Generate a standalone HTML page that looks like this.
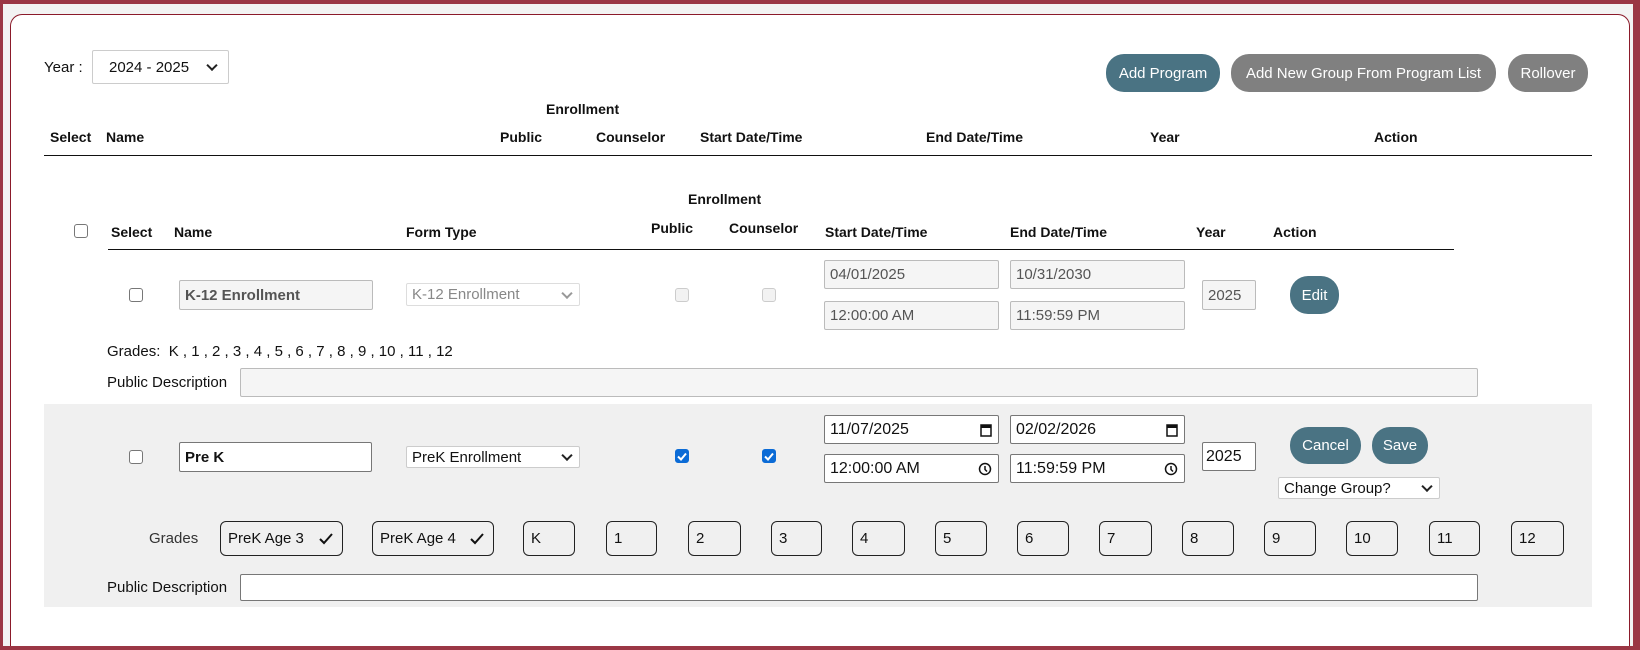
<!DOCTYPE html>
<html><head><style>
*{box-sizing:border-box;margin:0;padding:0}
body{width:1640px;height:650px;background:#9b3745;position:relative;overflow:hidden;font-family:"Liberation Sans",sans-serif;font-size:14px;color:#111}
.bg{position:absolute;left:3px;top:4px;width:1630px;height:642px;background:#f3f3f3}
.panel{position:absolute;left:10px;top:14px;width:1620px;height:632px;background:#fff;border:1px solid #8b1a2a;border-bottom:none;border-radius:12px 12px 0 0}
.a{position:absolute;white-space:nowrap}
.b{font-weight:bold}
.in{position:absolute;border:1px solid #bbb;background:#f5f5f5;border-radius:2px;padding:0 5px;display:flex;align-items:center;font-size:15px;color:#555}
.w{background:#fff;border-color:#777;color:#111}
.btn{position:absolute;border-radius:18px;color:#fff;font-size:15px;display:flex;align-items:center;justify-content:center;background:#4a7383}
.g{background:#808080}
.cb{position:absolute;width:14px;height:14px;border:1px solid #777;border-radius:3px;background:#fff}
.cbd{border-color:#ccc;background:#f2f2f2}
.cbc{background:#0b6bd6;border-color:#0b6bd6}
.gb{position:absolute;top:521px;height:35px;border:1px solid #222;border-radius:6px;padding-left:10px;display:flex;align-items:center;font-size:15px}
.chev{position:absolute;right:8px;top:50%;width:8px;height:8px;border-right:2px solid #222;border-bottom:2px solid #222;transform:translateY(-70%) rotate(45deg)}
.line{position:absolute;height:1px;background:#111}
</style></head><body>
<div class="bg"></div>
<div class="panel"></div>

<div class="a" style="left:44px;top:59px;font-size:15px">Year :</div>
<div class="in w" style="left:92px;top:50px;width:137px;height:34px;border-color:#ccc;font-size:15px;padding-left:16px">2024 - 2025<span class="chev" style="right:12px"></span></div>
<div class="btn" style="left:1106px;top:54px;width:114px;height:38px">Add Program</div>
<div class="btn g" style="left:1231px;top:54px;width:265px;height:38px">Add New Group From Program List</div>
<div class="btn g" style="left:1508px;top:54px;width:80px;height:38px">Rollover</div>

<div class="a b" style="left:546px;top:101px">Enrollment</div>
<div class="a b" style="left:50px;top:129px">Select</div>
<div class="a b" style="left:106px;top:129px">Name</div>
<div class="a b" style="left:500px;top:129px">Public</div>
<div class="a b" style="left:596px;top:129px">Counselor</div>
<div class="a b" style="left:700px;top:129px">Start Date/Time</div>
<div class="a b" style="left:926px;top:129px">End Date/Time</div>
<div class="a b" style="left:1150px;top:129px">Year</div>
<div class="a b" style="left:1374px;top:129px">Action</div>
<div class="line" style="left:44px;top:155px;width:1548px"></div>

<div class="a b" style="left:688px;top:191px">Enrollment</div>
<div class="cb" style="left:74px;top:224px"></div>
<div class="a b" style="left:111px;top:224px">Select</div>
<div class="a b" style="left:174px;top:224px">Name</div>
<div class="a b" style="left:406px;top:224px">Form Type</div>
<div class="a b" style="left:651px;top:220px">Public</div>
<div class="a b" style="left:729px;top:220px">Counselor</div>
<div class="a b" style="left:825px;top:224px">Start Date/Time</div>
<div class="a b" style="left:1010px;top:224px">End Date/Time</div>
<div class="a b" style="left:1196px;top:224px">Year</div>
<div class="a b" style="left:1273px;top:224px">Action</div>
<div class="line" style="left:108px;top:249px;width:1346px"></div>

<!-- row 1 -->
<div class="cb" style="left:129px;top:288px"></div>
<div class="in" style="left:179px;top:280px;width:194px;height:30px;font-weight:bold;color:#555">K-12 Enrollment</div>
<div class="in" style="left:406px;top:283px;width:174px;height:23px;background:#fff;border-color:#ddd;color:#888">K-12 Enrollment<span class="chev" style="border-color:#999"></span></div>
<div class="cb cbd" style="left:675px;top:288px"></div>
<div class="cb cbd" style="left:762px;top:288px"></div>
<div class="in" style="left:824px;top:260px;width:175px;height:29px">04/01/2025</div>
<div class="in" style="left:1010px;top:260px;width:175px;height:29px">10/31/2030</div>
<div class="in" style="left:824px;top:301px;width:175px;height:29px">12:00:00 AM</div>
<div class="in" style="left:1010px;top:301px;width:175px;height:29px">11:59:59 PM</div>
<div class="in" style="left:1202px;top:280px;width:54px;height:30px">2025</div>
<div class="btn" style="left:1290px;top:276px;width:49px;height:38px">Edit</div>
<div class="a" style="left:107px;top:343px;font-size:15px">Grades:&nbsp; K , 1 , 2 , 3 , 4 , 5 , 6 , 7 , 8 , 9 , 10 , 11 , 12</div>
<div class="a" style="left:107px;top:374px;font-size:15px">Public Description</div>
<div class="in" style="left:240px;top:368px;width:1238px;height:29px"></div>

<!-- row 2 -->
<div class="a" style="left:44px;top:404px;width:1548px;height:203px;background:#f0f0f0"></div>
<div class="cb" style="left:129px;top:450px"></div>
<div class="in w" style="left:179px;top:442px;width:193px;height:30px;font-weight:bold">Pre K</div>
<div class="in w" style="left:406px;top:446px;width:174px;height:22px;border-color:#ccc">PreK Enrollment<span class="chev"></span></div>
<div class="cb cbc" style="left:675px;top:449px"><svg width="14" height="14" style="position:absolute;left:-1px;top:-1px"><path d="M3 7.5l3 3 5-6" stroke="#fff" stroke-width="2" fill="none"/></svg></div>
<div class="cb cbc" style="left:762px;top:449px"><svg width="14" height="14" style="position:absolute;left:-1px;top:-1px"><path d="M3 7.5l3 3 5-6" stroke="#fff" stroke-width="2" fill="none"/></svg></div>
<div class="in w" style="left:824px;top:415px;width:175px;height:29px;font-size:16px">11/07/2025<svg style="position:absolute;right:6px" width="12" height="14"><rect x="1" y="2" width="10" height="11" fill="none" stroke="#111" stroke-width="1.5"/><rect x="1" y="2" width="10" height="3" fill="#111"/></svg></div>
<div class="in w" style="left:1010px;top:415px;width:175px;height:29px;font-size:16px">02/02/2026<svg style="position:absolute;right:6px" width="12" height="14"><rect x="1" y="2" width="10" height="11" fill="none" stroke="#111" stroke-width="1.5"/><rect x="1" y="2" width="10" height="3" fill="#111"/></svg></div>
<div class="in w" style="left:824px;top:454px;width:175px;height:29px;font-size:16px">12:00:00 AM<svg style="position:absolute;right:6px" width="14" height="14"><circle cx="7" cy="7" r="5.5" fill="none" stroke="#111" stroke-width="1.5"/><path d="M7 4v3.5l2 2" stroke="#111" stroke-width="1.5" fill="none"/></svg></div>
<div class="in w" style="left:1010px;top:454px;width:175px;height:29px;font-size:16px">11:59:59 PM<svg style="position:absolute;right:6px" width="14" height="14"><circle cx="7" cy="7" r="5.5" fill="none" stroke="#111" stroke-width="1.5"/><path d="M7 4v3.5l2 2" stroke="#111" stroke-width="1.5" fill="none"/></svg></div>
<div class="in w" style="left:1202px;top:442px;width:54px;height:29px;font-size:16px;padding-left:3px">2025</div>
<div class="btn" style="left:1290px;top:427px;width:71px;height:37px">Cancel</div>
<div class="btn" style="left:1372px;top:427px;width:56px;height:37px">Save</div>
<div class="in w" style="left:1278px;top:477px;width:162px;height:22px;border-color:#ccc">Change Group?<span class="chev"></span></div>

<div class="a" style="left:149px;top:530px;font-size:15px;color:#333">Grades</div>
<div class="gb" style="left:220px;width:123px;padding-left:7px">PreK Age 3<svg style="position:absolute;right:8px" width="16" height="14"><path d="M2 7l4 4 8-9" stroke="#111" stroke-width="2" fill="none"/></svg></div>
<div class="gb" style="left:372px;width:122px;padding-left:7px">PreK Age 4<svg style="position:absolute;right:8px" width="16" height="14"><path d="M2 7l4 4 8-9" stroke="#111" stroke-width="2" fill="none"/></svg></div>
<div class="gb" style="left:523px;width:52px;padding-left:7px">K</div>
<div class="gb" style="left:606px;width:51px;padding-left:7px">1</div>
<div class="gb" style="left:688px;width:53px;padding-left:7px">2</div>
<div class="gb" style="left:771px;width:51px;padding-left:7px">3</div>
<div class="gb" style="left:852px;width:53px;padding-left:7px">4</div>
<div class="gb" style="left:935px;width:52px;padding-left:7px">5</div>
<div class="gb" style="left:1017px;width:52px;padding-left:7px">6</div>
<div class="gb" style="left:1099px;width:53px;padding-left:7px">7</div>
<div class="gb" style="left:1182px;width:52px;padding-left:7px">8</div>
<div class="gb" style="left:1264px;width:52px;padding-left:7px">9</div>
<div class="gb" style="left:1346px;width:52px;padding-left:7px">10</div>
<div class="gb" style="left:1429px;width:51px;padding-left:7px">11</div>
<div class="gb" style="left:1511px;width:53px;padding-left:7px">12</div>
<div class="a" style="left:107px;top:579px;font-size:15px">Public Description</div>
<div class="in w" style="left:240px;top:574px;width:1238px;height:27px"></div>
</body></html>
